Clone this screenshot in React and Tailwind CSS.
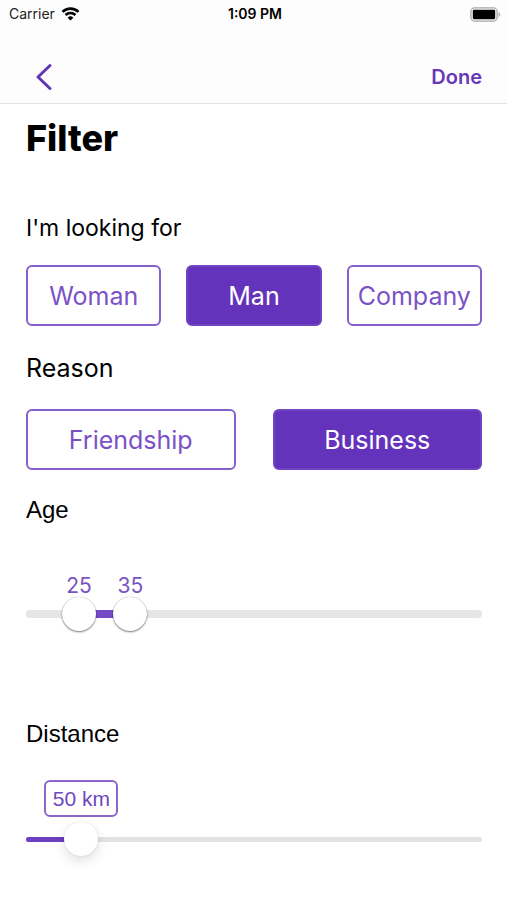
import { useState } from "react";

const THUMB = 34;

const thumbCentre = (value, min, max) => {
  const f = (value - min) / (max - min);
  return `calc(${THUMB / 2}px + (100% - ${THUMB}px) * ${f})`;
};

function StatusBar() {
  return (
    <div className="grid h-7 grid-cols-3 items-center pl-[9px] pr-[6px] text-black">
      <div className="flex items-center gap-[6px]">
        <span className="text-[14px] leading-5 text-[#222]">Carrier</span>
        <svg width="19" height="14" viewBox="0 0 18 14" aria-hidden="true" fill="none" stroke="#000" strokeWidth="2.6">
          <path d="M1 4.9a11.4 11.4 0 0 1 16 0" />
          <path d="M4 8a7.1 7.1 0 0 1 10 0" />
          <path d="M9 13.6 6.1 10.7a4.1 4.1 0 0 1 5.8 0Z" fill="#000" stroke="none" />
        </svg>
      </div>
      <span className="text-center text-[14px] font-semibold leading-5">1:09 PM</span>
      <svg className="justify-self-end" width="31" height="15" viewBox="0 0 31 15" aria-hidden="true">
        <rect x="0.9" y="0.9" width="26.2" height="13.2" rx="4" fill="#fff" stroke="#bdbdbd" strokeWidth="1.8" />
        <rect x="2.8" y="2.8" width="22.4" height="9.4" rx="1.4" fill="#000" />
        <path d="M28.4 5c2.6.8 2.6 4.2 0 5Z" fill="#bdbdbd" />
      </svg>
    </div>
  );
}

function Choice({ label, selected, onSelect }) {
  return (
    <button
      type="button"
      aria-pressed={selected}
      onClick={onSelect}
      className={
        "flex h-[61px] items-center justify-center rounded-[6px] border-2 text-[25px] leading-8 " +
        (selected
          ? "border-[#7043c2] bg-[#6433bb] text-white"
          : "border-[#8560ca] bg-white text-[#7a52c6]")
      }
    >
      {label}
    </button>
  );
}

const rangeBase =
  "absolute inset-0 m-0 h-full w-full appearance-none bg-transparent outline-none " +
  "[&::-webkit-slider-thumb]:h-[34px] [&::-webkit-slider-thumb]:w-[34px] [&::-webkit-slider-thumb]:appearance-none " +
  "[&::-webkit-slider-thumb]:rounded-full [&::-webkit-slider-thumb]:bg-white ";

const ageThumb =
  "pointer-events-none [&::-webkit-slider-thumb]:pointer-events-auto " +
  "[&::-webkit-slider-thumb]:shadow-[0_1px_2px_rgba(0,0,0,0.5),0_0_1px_rgba(0,0,0,0.3)]";

const distanceThumb =
  "[&::-webkit-slider-thumb]:shadow-[0_5px_12px_rgba(0,0,0,0.12),0_0_2px_rgba(0,0,0,0.12)]";

export default function App() {
  const [who, setWho] = useState("Man");
  const [reason, setReason] = useState("Business");
  const [low, setLow] = useState(25);
  const [high, setHigh] = useState(35);
  const [distance, setDistance] = useState(50);

  const ageLow = thumbCentre(low, 18, 100);
  const ageHigh = thumbCentre(high, 18, 100);
  const distAt = thumbCentre(distance, 5, 500);

  return (
    <div className="min-h-screen bg-white font-['Inter','Liberation_Sans',sans-serif] text-black">
      <header className="border-b border-[#e2e2e2] bg-[#fdfdfd]">
        <StatusBar />
        <nav className="mt-[22px] flex h-[53px] items-center justify-between pl-[26px] pr-[25px]">
          <button type="button" aria-label="Back" className="flex h-10 w-9 items-center justify-center">
            <svg width="18" height="28" viewBox="0 0 18 28" fill="none" stroke="#6135b5" strokeWidth="3" strokeLinecap="round" strokeLinejoin="round">
              <path d="M15 2.5 3 14 15 25.5" />
            </svg>
          </button>
          <button type="button" className="text-[20px] font-semibold leading-7 text-[#6638b8]">
            Done
          </button>
        </nav>
      </header>

      <main className="pb-10 pl-[26px] pr-[25px]">
        <h1 className="pt-[10px] text-[36px] font-extrabold leading-[48px]">Filter</h1>

        <section className="mt-[50px]">
          <h2 className="text-[23px] leading-8">I'm looking for</h2>
          <div className="mt-[21px] grid grid-cols-3 gap-[25px]">
            {["Woman", "Man", "Company"].map((w) => (
              <Choice key={w} label={w} selected={who === w} onSelect={() => setWho(w)} />
            ))}
          </div>
        </section>

        <section className="mt-[26px]">
          <h2 className="text-[25px] leading-8">Reason</h2>
          <div className="mt-[25px] grid grid-cols-2 gap-[37px]">
            {["Friendship", "Business"].map((r) => (
              <Choice key={r} label={r} selected={reason === r} onSelect={() => setReason(r)} />
            ))}
          </div>
        </section>

        <section className="mt-[24px]">
          <h2 className="font-['Liberation_Sans',Arial,sans-serif] text-[24px] leading-8">Age</h2>
          <div className="relative mt-[48px] h-[23px] text-[21px] leading-6 text-[#7a52c6]">
            <output className="absolute -translate-x-1/2" style={{ left: ageLow }}>{low}</output>
            <output className="absolute -translate-x-1/2" style={{ left: ageHigh }}>{high}</output>
          </div>
          <div className="relative flex h-[34px] items-center">
            <div className="h-2 w-full rounded-full bg-[#e5e5e5]" />
            <div
              className="absolute h-2 bg-[#744bc4]"
              style={{ left: ageLow, width: `calc((100% - ${THUMB}px) * ${(high - low) / 82})` }}
            />
            <input
              type="range" aria-label="Minimum age" min="18" max="100" value={low}
              onChange={(e) => setLow(Math.min(+e.target.value, high))}
              className={rangeBase + ageThumb}
            />
            <input
              type="range" aria-label="Maximum age" min="18" max="100" value={high}
              onChange={(e) => setHigh(Math.max(+e.target.value, low))}
              className={rangeBase + ageThumb}
            />
          </div>
        </section>

        <section className="mt-[87px]">
          <h2 className="font-['Liberation_Sans',Arial,sans-serif] text-[24px] leading-8">Distance</h2>
          <div className="relative mt-[30px] h-[37px]">
            <output
              className="absolute flex h-[37px] w-[74px] -translate-x-1/2 items-center justify-center whitespace-nowrap rounded-[6px] border-2 border-[#8a66cc] font-['Liberation_Sans',Arial,sans-serif] text-[21px] leading-6 text-[#7047c2]"
              style={{ left: distAt }}
            >
              {distance} km
            </output>
          </div>
          <div className="relative mt-[5px] flex h-[34px] items-center">
            <div className="h-[5px] w-full rounded-full bg-[#e2e2e2]" />
            <div className="absolute left-0 h-[5px] rounded-full bg-[#6b3fc0]" style={{ width: distAt }} />
            <input
              type="range" aria-label="Distance" min="5" max="500" value={distance}
              onChange={(e) => setDistance(+e.target.value)}
              className={rangeBase + distanceThumb}
            />
          </div>
        </section>
      </main>
    </div>
  );
}
